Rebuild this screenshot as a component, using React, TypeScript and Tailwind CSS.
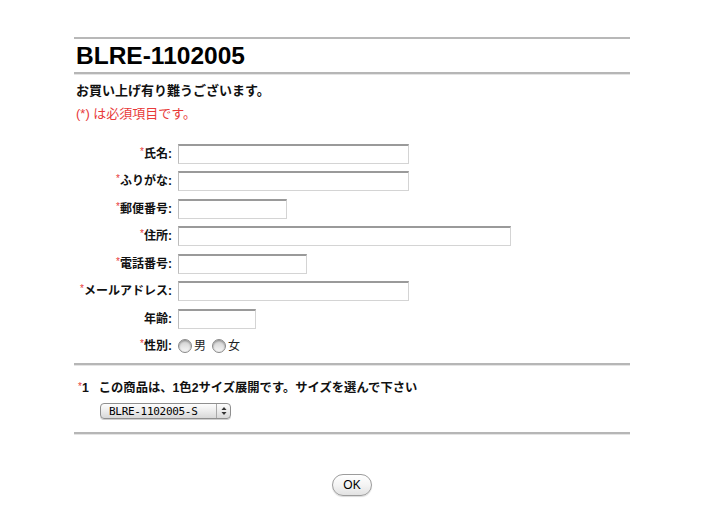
import React from "react";

const jp = { fontFamily: '"Liberation Sans", "Noto Sans CJK JP", sans-serif' };

function Req() {
  return <span className="text-[#e83a3a] text-[10px] font-normal align-top relative top-[-1px]">*</span>;
}

function Field({ label, req, width }: { label: string; req?: boolean; width: number }) {
  return (
    <div className="flex items-center h-[27.5px]">
      <div className="w-[104px] text-right text-[12px] font-bold text-[#111] pr-[6px] whitespace-nowrap">
        {req && <Req />}
        {label}:
      </div>
      <div
        className="h-[20px] bg-white border border-[#d4d4d4] border-t-[2px] border-t-[#9a9a9a] border-l-[#bdbdbd]"
        style={{ width }}
      />
    </div>
  );
}

function Radio({ label }: { label: string }) {
  return (
    <div className="flex items-center gap-[2px]">
      <span className="w-[14px] h-[14px] rounded-full border border-[#8a8a8a] bg-gradient-to-b from-[#cfcfcf] to-[#f7f7f7] shadow-[inset_0_1px_2px_rgba(0,0,0,0.35)]" />
      <span className="text-[12px] font-normal text-[#222]">{label}</span>
    </div>
  );
}

function Rule() {
  return <div className="h-[3px] border-t-[2px] border-[#b6b6b6] border-b border-b-[#e4e4e4]" />;
}

export default function App() {
  return (
    <div className="w-[720px] h-[505px] bg-white" style={jp}>
      <div className="ml-[74px] w-[556px] pt-[37px]">
        <div className="h-[2px] bg-[#b8b8b8]" />
        <div className="h-[33px] flex items-center pl-[2px] text-[24.5px] font-bold text-black leading-none pt-[2px]">
          BLRE-1102005
        </div>
        <Rule />
        <div className="mt-[8px] pl-[2px] text-[13px] font-bold text-[#111] leading-[16px]">
          お買い上げ有り難うございます。
        </div>
        <div className="mt-[7px] pl-[2px] text-[13px] text-[#e83a3a] leading-[16px]">
          (*) は必須項目です。
        </div>
        <div className="mt-[18px]">
          <Field label="氏名" req width={231} />
          <Field label="ふりがな" req width={231} />
          <Field label="郵便番号" req width={109} />
          <Field label="住所" req width={333} />
          <Field label="電話番号" req width={129} />
          <Field label="メールアドレス" req width={231} />
          <Field label="年齢" width={78} />
          <div className="flex items-center h-[27.5px]">
            <div className="w-[104px] text-right text-[12px] font-bold text-[#111] pr-[6px]">
              <Req />
              性別:
            </div>
            <div className="flex items-center gap-[6px]">
              <Radio label="男" />
              <Radio label="女" />
            </div>
          </div>
        </div>
        <div className="mt-[3px]">
          <Rule />
        </div>
        <div className="mt-[14px] pl-[4px] text-[12.3px] font-bold text-[#111] leading-[16px] flex">
          <span>
            <Req />1
          </span>
          <span className="ml-[10px]">この商品は、1色2サイズ展開です。サイズを選んで下さい</span>
        </div>
        <div className="mt-[7px] ml-[26px] flex">
          <div className="h-[16px] w-[131px] rounded-[4px] border border-[#8f8f8f] bg-gradient-to-b from-[#fdfdfd] via-[#ececec] to-[#d8d8d8] flex items-center shadow-[0_1px_0_#cfcfcf]">
            <span className="flex-1 pl-[8px] text-[11px] text-black leading-none" style={{ fontFamily: '"DejaVu Sans Mono", monospace', letterSpacing: "-0.3px" }}>
              BLRE-1102005-S
            </span>
            <span className="w-[14px] h-full border-l border-[#a8a8a8] flex items-center justify-center">
              <svg width="6" height="10" viewBox="0 0 6 10">
                <path d="M3 1 L5.5 4 L0.5 4 Z" fill="#333" />
                <path d="M3 9 L5.5 6 L0.5 6 Z" fill="#333" />
              </svg>
            </span>
          </div>
        </div>
        <div className="mt-[13px]">
          <Rule />
        </div>
        <div className="mt-[39px] flex justify-center pr-[0px]">
          <div className="w-[40px] h-[22px] rounded-[11px] border border-[#9c9c9c] bg-gradient-to-b from-white via-[#f4f4f4] to-[#e2e2e2] flex items-center justify-center text-[12px] text-black shadow-[0_1px_1px_rgba(0,0,0,0.15)]" style={{ fontFamily: '"Liberation Sans", sans-serif' }}>
            OK
          </div>
        </div>
      </div>
    </div>
  );
}
